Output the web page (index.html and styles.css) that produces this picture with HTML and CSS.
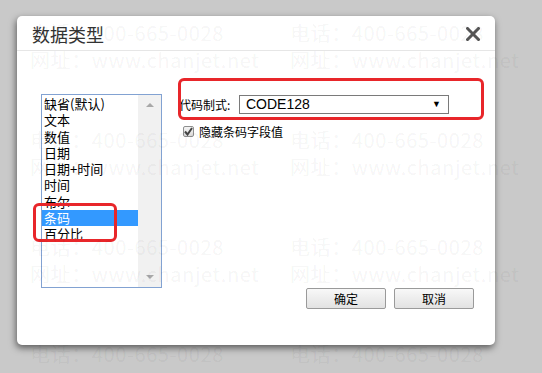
FILE: index.html
```html
<!DOCTYPE html>
<html lang="zh-CN">
<head>
  <meta charset="UTF-8" />
  <title>数据类型</title>
  <link rel="stylesheet" href="styles.css">
</head>
<body>
  <div class="page">
    <div class="dialog">
      <div class="dialog-header">
        <span class="dialog-title">数据类型</span>
        <span class="close">
          <svg width="14" height="14" viewBox="0 0 14 14"><path d="M1.5 1.5 L12.5 12.5 M12.5 1.5 L1.5 12.5" stroke="#555" stroke-width="3" stroke-linecap="square"/></svg>
        </span>
      </div>

      <div class="dialog-body">
        <div class="listbox">
          <div class="list-items">
            <div class="list-item">缺省(默认)</div>
            <div class="list-item">文本</div>
            <div class="list-item">数值</div>
            <div class="list-item">日期</div>
            <div class="list-item">日期+时间</div>
            <div class="list-item">时间</div>
            <div class="list-item">布尔</div>
            <div class="list-item selected">条码</div>
            <div class="list-item">百分比</div>
          </div>
          <div class="scrollbar">
            <span class="arrow up"></span>
            <span class="arrow down"></span>
          </div>
        </div>

        <div class="options">
          <div class="option-row">
            <span class="label">代码制式:</span>
            <div class="select">
              <span>CODE128</span>
              <span class="select-arrow">▼</span>
            </div>
          </div>
          <div class="check-row">
            <span class="checkbox">
              <svg width="9" height="9" viewBox="0 0 9 9"><path d="M1 4.5 L3.5 7.5 L8 1" fill="none" stroke="#444" stroke-width="2"/></svg>
            </span>
            <span>隐藏条码字段值</span>
          </div>
        </div>
      </div>

      <div class="dialog-footer">
        <button class="btn">确定</button>
        <button class="btn">取消</button>
      </div>
    </div>

    <!-- red annotation marks -->
    <div class="mark mark-format"></div>
    <div class="mark mark-item"></div>

    <div class="watermark">
      <div class="wm-block"><div>电话：400-665-0028</div><div>网址：www.chanjet.net</div></div>
      <div class="wm-block"><div>电话：400-665-0028</div><div>网址：www.chanjet.net</div></div>
      <div class="wm-block"><div>电话：400-665-0028</div><div>网址：www.chanjet.net</div></div>
      <div class="wm-block"><div>电话：400-665-0028</div><div>网址：www.chanjet.net</div></div>
      <div class="wm-block"><div>电话：400-665-0028</div><div>网址：www.chanjet.net</div></div>
      <div class="wm-block"><div>电话：400-665-0028</div><div>网址：www.chanjet.net</div></div>
      <div class="wm-block"><div>电话：400-665-0028</div></div>
      <div class="wm-block"><div>电话：400-665-0028</div></div>
    </div>
  </div>
</body>
</html>
```

FILE: styles.css
```css
body {
  margin: 0;
  padding: 0;
  background-color: #c9c9c9;
  font-family: "Noto Sans CJK SC", "Noto Sans", sans-serif;
  color: #000;
  overflow: hidden;
}

.page {
  position: relative;
  height: 373px;
  padding: 16px 0 0 17px;
  box-sizing: border-box;
  overflow: hidden;
}

.dialog {
  width: 478px;
  height: 329px;
  background-color: #fff;
  border-radius: 5px;
  box-shadow: -1px 3px 7px rgba(0, 0, 0, 0.55);
  display: flex;
  flex-direction: column;
}

.dialog-header {
  height: 34px;
  border-bottom: 1px solid #e6e6e6;
  display: flex;
  align-items: center;
  justify-content: space-between;
  padding: 0 15px 0 15px;
}

.dialog-title {
  font-size: 18px;
  color: #333;
  line-height: 20px;
  padding-top: 1px;
}

.close {
  display: flex;
  padding-top: 2px;
}

.dialog-body {
  display: flex;
  padding: 43px 0 0 24px;
}

.listbox {
  width: 121px;
  height: 194px;
  border: 1px solid #82a2d2;
  box-sizing: border-box;
  display: flex;
}

.list-items {
  flex: 1;
  padding-top: 1px;
}

.list-item {
  font-size: 13px;
  line-height: 16.25px;
  height: 16.25px;
  padding-left: 2px;
  white-space: nowrap;
}

.list-item.selected {
  background-color: #3399ff;
  color: #fff;
}

.scrollbar {
  width: 23px;
  background-color: #f1f1f1;
  display: flex;
  flex-direction: column;
  justify-content: space-between;
  align-items: center;
  padding: 8px 0 8px;
}

.arrow {
  width: 0;
  height: 0;
  border-left: 4px solid transparent;
  border-right: 4px solid transparent;
}

.arrow.up {
  border-bottom: 4px solid #a8a8a8;
}

.arrow.down {
  border-top: 4px solid #a8a8a8;
}

.options {
  margin-left: 17px;
  font-size: 12px;
}

.option-row {
  display: flex;
  align-items: center;
  height: 20px;
}

.label {
  width: 60px;
}

.select {
  width: 210px;
  height: 19px;
  border: 1px solid #7a7a7a;
  box-sizing: border-box;
  display: flex;
  align-items: center;
  justify-content: space-between;
  padding: 0 7px 0 6px;
  font-family: "Liberation Sans", Arial, sans-serif;
  font-size: 14px;
}

.select-arrow {
  font-size: 9px;
}

.check-row {
  display: flex;
  align-items: center;
  gap: 5px;
  margin: 10px 0 0 4px;
  height: 14px;
}

.checkbox {
  width: 11px;
  height: 11px;
  border: 1px solid #8e8f8f;
  border-radius: 2px;
  box-sizing: border-box;
  background: linear-gradient(#f4f4f4, #dcdcdc);
  display: flex;
  align-items: center;
  justify-content: center;
}

.dialog-footer {
  margin-top: auto;
  display: flex;
  justify-content: flex-end;
  gap: 8px;
  padding: 0 21px 36px 0;
}

.btn {
  width: 80px;
  height: 21px;
  border: 1px solid #9a9a9a;
  border-radius: 2px;
  background: linear-gradient(#f8f8f8, #e2e2e2);
  font-family: "Noto Sans CJK SC", sans-serif;
  font-size: 12px;
  line-height: 17px;
  padding: 0;
  color: #000;
}

.mark {
  position: absolute;
  border: 3px solid #e8262a;
  border-radius: 6px;
  box-sizing: border-box;
}

.mark-format {
  left: 178px;
  top: 78px;
  width: 306px;
  height: 42px;
}

.mark-item {
  left: 33px;
  top: 203px;
  width: 84px;
  height: 39px;
}

.watermark {
  position: absolute;
  top: 19px;
  left: 30px;
  display: grid;
  grid-template-columns: 260px 260px;
  row-gap: 53px;
  pointer-events: none;
  color: rgba(0, 0, 0, 0.055);
  font-size: 20px;
  line-height: 27px;
  white-space: nowrap;
  letter-spacing: 0.6px;
}
```
